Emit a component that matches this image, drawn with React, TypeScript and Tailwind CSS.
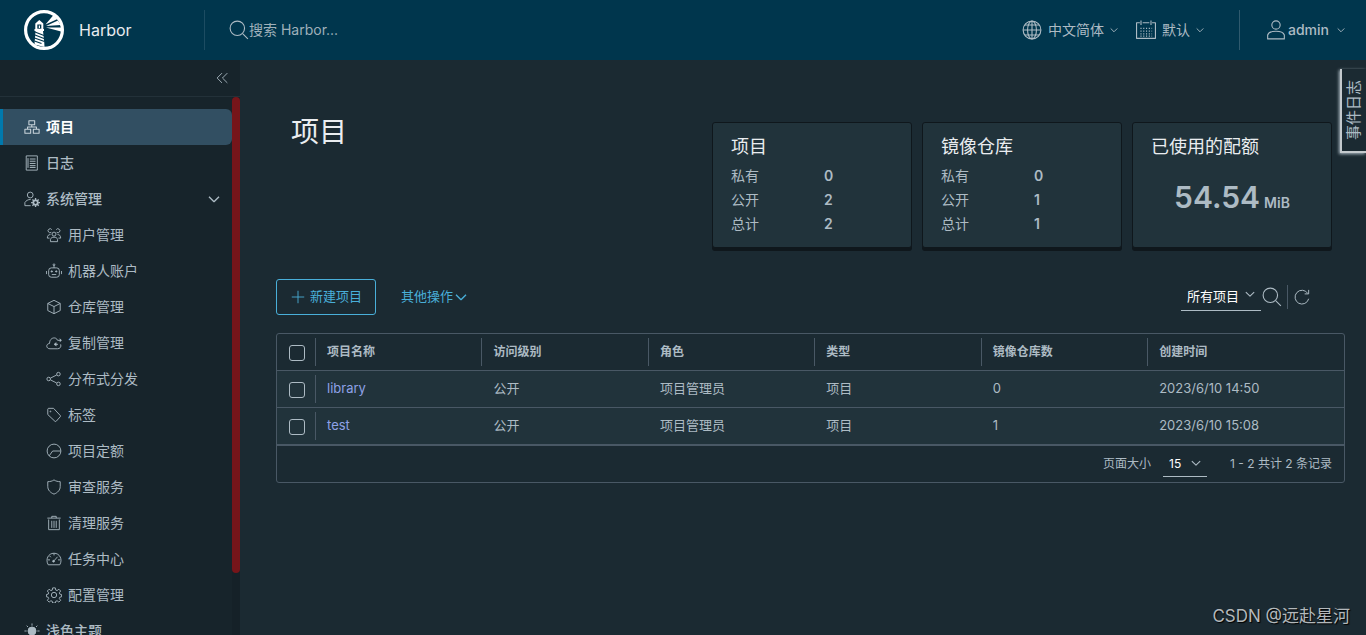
import { clsx } from 'clsx';

interface IconProps {
  className?: string;
  children?: React.ReactNode;
}

function Icon({ className = 'size-4', children }: IconProps) {
  return (
    <svg viewBox="0 0 36 36" fill="none" stroke="currentColor" strokeWidth="2" strokeLinejoin="round" className={clsx('shrink-0', className)} aria-hidden="true">
      {children}
    </svg>
  );
}

const icons = {
  organization: (
    <>
      <path d="M11 4h13v9H11zM2 23h13v9H2zM21 23h13v9H21zM17.500 13v5M8 23v-5h20v5" strokeWidth="2.400" />
    </>
  ),
  logs: (
    <>
      <path d="M5 2h25v32H5z" />
      <path d="M9 7v22M13 9h13M13 14h13M13 19h13M13 24h13M13 28h13" strokeWidth="2.200" />
    </>
  ),
  admin: (
    <>
      <circle cx="14" cy="9" r="6.500" />
      <path d="M15 33H2v-7c2-4 7-7 13-7" />
      <circle cx="26" cy="26" r="5" strokeWidth="4" />
      <path d="M26 16v4M26 32v4M16 26h4M32 26h4M19 19l3 3M30 30l3 3M33 19l-3 3M22 30l-3 3" strokeWidth="3" />
    </>
  ),
  users: (
    <>
      <circle cx="18" cy="16" r="4.500" />
      <path d="M10 33v-5c1-4 4-5 8-5s7 1 8 5v5zM12 12a4.500 4.500 0 1 1 1-6M24 12a4.500 4.500 0 1 0-1-6M10 17c-4 0-7 2-7 8h5M26 17c4 0 7 2 7 8h-5" />
    </>
  ),
  robot: (
    <>
      <rect x="6" y="11" width="24" height="21" rx="6" />
      <circle cx="18" cy="4" r="2" />
      <path d="M18 6v5M1 18v7M35 18v7M13 26h10" />
      <circle cx="13" cy="19" r="1.500" fill="currentColor" />
      <circle cx="23" cy="19" r="1.500" fill="currentColor" />
    </>
  ),
  block: <path d="M18 3l14 7v16l-14 7-14-7V10zM4 10l14 7 14-7M18 17v16" />,
  replication: (
    <>
      <path d="M33 21c2 6-2 10-7 10H9c-9 0-10-11-1-12C8 5 23 3 26 12M19 21h8M26 12h8" />
      <path d="M23 17v8l-5-4zM31 8l4 4-4 4" fill="currentColor" strokeWidth="1" />
    </>
  ),
  share: (
    <>
      <circle cx="6" cy="18" r="4" />
      <circle cx="28" cy="7" r="4" />
      <circle cx="28" cy="29" r="4" />
      <path d="M10 16l14-7M10 20l14 7" />
    </>
  ),
  tag: (
    <>
      <path d="M4 5c0-1 1-2 2-2h11l15 16c1 1 1 2 0 3l-9 10c-1 1-2 1-3 0L4 17z" />
      <circle cx="10" cy="10" r="1" />
    </>
  ),
  quota: (
    <>
      <circle cx="18" cy="18" r="15.500" />
      <path d="M7 29l8-11h18" />
    </>
  ),
  shield: <path d="M18 2c4 3 9 4 14 4v11c0 8-6 14-14 17C10 31 4 25 4 17V6c5 0 10-1 14-4z" />,
  trash: <path d="M3 7h30M13 7V3h10v4M6 10v23h24V10M13 13v16M18 13v16M23 13v16" />,
  dashboard: (
    <>
      <path d="M5 31C-2 19 5 5 18 5s20 14 13 26zM18 5v5M4 20h5M27 20h5M8 11l3 3M18 22l8-9" />
      <circle cx="17" cy="23" r="2" fill="currentColor" />
    </>
  ),
  cog: (
    <>
      <circle cx="18" cy="18" r="6" />
      <path d="M15 2h6l1 5 3 1 4-3 4 4-3 4 1 3 4 1v5l-4 1-1 3 3 4-4 4-4-3-3 1-1 4h-6l-1-4-3-1-4 3-4-4 3-4-1-3-4-1v-5l4-1 1-3-3-4 4-4 4 3 3-1z" />
    </>
  ),
  sun: (
    <>
      <circle cx="18" cy="18" r="9" fill="currentColor" />
      <path d="M18 1v5M18 30v5M1 18h5M30 18h5M6 6l3 3M27 27l3 3M30 6l-3 3M9 27l-3 3" />
    </>
  ),
};

const systemItems = [
  { label: '用户管理', icon: icons.users },
  { label: '机器人账户', icon: icons.robot },
  { label: '仓库管理', icon: icons.block },
  { label: '复制管理', icon: icons.replication },
  { label: '分布式分发', icon: icons.share },
  { label: '标签', icon: icons.tag },
  { label: '项目定额', icon: icons.quota },
  { label: '审查服务', icon: icons.shield },
  { label: '清理服务', icon: icons.trash },
  { label: '任务中心', icon: icons.dashboard },
  { label: '配置管理', icon: icons.cog },
];

const columns = ['项目名称', '访问级别', '角色', '类型', '镜像仓库数', '创建时间'];

const projects = [
  { name: 'library', access: '公开', role: '项目管理员', type: '项目', repos: 0, created: '2023/6/10 14:50' },
  { name: 'test', access: '公开', role: '项目管理员', type: '项目', repos: 1, created: '2023/6/10 15:08' },
];

const projectStats = [
  { label: '私有', value: 0 },
  { label: '公开', value: 2 },
  { label: '总计', value: 2 },
];

const repoStats = [
  { label: '私有', value: 0 },
  { label: '公开', value: 1 },
  { label: '总计', value: 1 },
];

function Chevron({ className = 'size-2' }: { className?: string }) {
  return (
    <Icon className={className}>
      <path d="M3 11l15 15 15-15" strokeWidth="4" />
    </Icon>
  );
}

function SearchIcon() {
  return (
    <Icon className="size-5">
      <circle cx="15" cy="15" r="13" />
      <path d="M25 25l9 9" />
    </Icon>
  );
}

function Logo() {
  return (
    <svg viewBox="0 0 40 40" className="size-10" aria-hidden="true">
      <circle cx="20" cy="20" r="18.400" fill="none" stroke="#fff" strokeWidth="3.200" />
      <path d="M15.300 10l4 3.500V19h.7v2h-1l1.300 12 .2 4-10-2.500L11.500 21h-1v-2h.8v-5.500z" fill="#fff" />
      <path d="M13.300 14.500h4v4.200h-4z" fill="#00364d" />
      <path d="M14.800 15.500h1.200v2.500h-1.200z" fill="#fff" />
      <path d="M11 22l9 3.500M11 25l9 3.500M10.500 28l10 3.500M10.500 31l7 2.500" stroke="#00364d" strokeWidth="1.200" />
      <path d="M21.500 14.500l8-9.500 4 4zM22 16l12-5.500 2.500 4.500zM22 17.500h15v4z" fill="#fff" />
    </svg>
  );
}

function Header() {
  return (
    <header className="flex h-15 shrink-0 items-center bg-[#00364d] text-sm text-[#adbbc4]">
      <a href="#" className="flex w-51 items-center gap-[15px] pl-6 text-base text-[#e9ecef]">
        <Logo />
        Harbor
      </a>
      <label className="flex h-10 flex-1 items-center border-l border-[#1c4c62] pl-6">
        <SearchIcon />
        <input type="text" aria-label="搜索" placeholder="搜索 Harbor..." className="w-60 bg-transparent outline-none placeholder:text-[#9fb0ba]" />
      </label>
      <button className="flex items-center gap-1.5">
        <Icon className="size-5">
          <circle cx="18" cy="18" r="16" />
          <ellipse cx="18" cy="18" rx="8" ry="16" />
          <path d="M18 2v32M2 18h32M5 9h26M5 27h26" />
        </Icon>
        中文简体
        <Chevron />
      </button>
      <button className="ml-[18px] flex items-center gap-1.5">
        <Icon className="size-5">
          <path d="M7 5H1v28h34V5h-6M12 5h12M9 1v8M27 1v8" />
          <path d="M8 15h21M8 20h21M8 25h21M8 29h21" strokeDasharray="2 3" />
        </Icon>
        默认
        <Chevron />
      </button>
      <div className="ml-[35px] h-10 border-l border-[#2f5a6e]" />
      <button className="mr-[21px] ml-[26px] flex items-center gap-0.5 font-medium">
        <Icon className="size-5">
          <circle cx="18" cy="9" r="7.500" />
          <path d="M3 34v-7c3-9 27-9 30 0v7z" />
        </Icon>
        admin
        <Chevron className="ml-1.5 size-2" />
      </button>
    </header>
  );
}

function Sidebar() {
  return (
    <aside className="flex w-60 shrink-0 flex-col bg-[#17242b] text-sm text-[#adbbc4]">
      <div className="flex h-[37px] shrink-0 items-center justify-end border-b border-[#233139] pr-2.5">
        <button aria-label="折叠">
          <Icon>
            <path d="M18 7L7 18l11 11M30 7L19 18l11 11" />
          </Icon>
        </button>
      </div>
      <div className="flex min-h-0 flex-1">
        <nav className="flex-1 overflow-hidden pt-3">
          <a href="#" className="flex h-9 items-center gap-1.5 rounded-r-md border-l-3 border-[#0079ad] bg-[#324f62] pl-[21px] font-bold text-white">
            <span className="text-[#c8d3da]"><Icon>{icons.organization}</Icon></span>
            项目
          </a>
          <a href="#" className="flex h-9 items-center gap-1.5 pl-6 font-medium">
            <Icon>{icons.logs}</Icon>
            日志
          </a>
          <button className="flex h-9 w-full items-center gap-1.5 pr-3 pl-6 font-medium">
            <Icon>{icons.admin}</Icon>
            系统管理
            <Chevron className="ml-auto size-3" />
          </button>
          {systemItems.map((item) => (
            <a key={item.label} href="#" className="flex h-9 items-center gap-1.5 pl-[46px]">
              <Icon>{item.icon}</Icon>
              {item.label}
            </a>
          ))}
          <button className="flex h-9 items-center gap-1.5 pl-6 font-medium">
            <Icon>{icons.sun}</Icon>
            浅色主题
          </button>
        </nav>
        <div className="w-2 bg-[#152128] pb-[62px]">
          <div className="h-full rounded-sm bg-[#76151a]" />
        </div>
      </div>
    </aside>
  );
}

function Card({ title, children }: { title: string; children: React.ReactNode }) {
  return (
    <section className="h-[126px] w-50 rounded-[3px] border border-[#0f171c] bg-[#21333b] px-[18px] pt-3 shadow-[0_3px_0_#0f171c]">
      <h3 className="text-lg leading-6 text-[#eaedf0]">{title}</h3>
      {children}
    </section>
  );
}

function StatsCard({ title, stats }: { title: string; stats: { label: string; value: number }[] }) {
  return (
    <Card title={title}>
      <dl className="mt-[5px] text-sm leading-6">
        {stats.map((stat) => (
          <div key={stat.label} className="flex">
            <dt className="w-[93px]">{stat.label}</dt>
            <dd className="font-semibold">{stat.value}</dd>
          </div>
        ))}
      </dl>
    </Card>
  );
}

const checkbox = 'block size-4 appearance-none rounded-[3px] border border-[#adbbc4] checked:bg-[#49afd9]';

function ProjectTable() {
  return (
    <div className="mt-[18px] rounded-[3px] border border-[#495865]">
      <table className="w-full table-fixed border-collapse text-left text-[13px] leading-5">
        <colgroup>
          <col className="w-[38px]" />
          {columns.slice(1).map((name) => (
            <col key={name} className="w-[15.6%]" />
          ))}
          <col />
        </colgroup>
        <thead>
          <tr className="h-9 text-xs">
            <th className="pt-0.5 pl-3">
              <input type="checkbox" aria-label="全选" className={checkbox} />
            </th>
            {columns.map((name) => (
              <th key={name} className="font-semibold">
                <div className="flex h-7 items-center border-l border-[#495865] pl-[11px]">{name}</div>
              </th>
            ))}
          </tr>
        </thead>
        <tbody>
          {projects.map((p) => (
            <tr key={p.name} className="h-[37px] border-t border-[#495865] bg-[#21333b]">
              <td className="pt-0.5 pl-3">
                <input type="checkbox" aria-label={p.name} className={checkbox} />
              </td>
              <td>
                <div className="flex h-7 items-center border-l border-[#495865] pb-0.5 pl-[11px]">
                  <a href="#" className="text-[#8fa2e8]">{p.name}</a>
                </div>
              </td>
              <td className="pb-0.5 pl-3">{p.access}</td>
              <td className="pb-0.5 pl-3">{p.role}</td>
              <td className="pb-0.5 pl-3">{p.type}</td>
              <td className="pb-0.5 pl-3">{p.repos}</td>
              <td className="pb-0.5 pl-3">{p.created}</td>
            </tr>
          ))}
        </tbody>
      </table>
      <div className="flex h-[38px] items-center justify-end border-t-2 border-[#495865] pr-3 text-xs">
        <label htmlFor="page-size">页面大小</label>
        <div className="relative ml-3 border-b border-[#adbbc4]">
          <select id="page-size" defaultValue="15" className="h-6 w-11 appearance-none bg-transparent pl-1.5 text-white outline-none">
            <option>15</option>
            <option>25</option>
            <option>50</option>
          </select>
          <Chevron className="pointer-events-none absolute top-1.5 right-1.5 size-2.5" />
        </div>
        <span className="ml-[23px]">1 - 2 共计 2 条记录</span>
      </div>
    </div>
  );
}

export default function App() {
  return (
    <div className="relative flex h-screen flex-col overflow-hidden bg-[#1b2a32] font-['Inter','Noto_Sans_CJK_SC',sans-serif] text-[#adbbc4]">
      <Header />
      <div className="flex min-h-0 flex-1">
        <Sidebar />
        <main className="min-w-0 flex-1 pt-[62px] pr-[21px] pl-9">
          <div className="flex items-start justify-between pr-[13px] pl-[15px]">
            <h1 className="-mt-2 text-[28px] leading-9 text-[#eaedf0]">项目</h1>
            <div className="flex gap-2.5">
              <StatsCard title="项目" stats={projectStats} />
              <StatsCard title="镜像仓库" stats={repoStats} />
              <Card title="已使用的配额">
                <p className="mt-[18px] flex items-baseline justify-center gap-1 font-semibold">
                  <span className="text-[30px] leading-10">54.54</span>
                  <span className="text-sm">MiB</span>
                </p>
              </Card>
            </div>
          </div>

          <div className="mt-[31px] flex items-center">
            <button className="flex h-9 items-center gap-1 rounded-[3px] border border-[#49afd9] px-[13px] text-[13px] text-[#49afd9]">
              <Icon className="size-4">
                <path d="M18 4v28M4 18h28" />
              </Icon>
              新建项目
            </button>
            <button className="ml-[25px] flex items-center gap-0.5 text-[13px] text-[#49afd9]">
              其他操作
              <Chevron className="size-3" />
            </button>
            <div className="mr-[35px] ml-auto flex items-center">
              <div className="relative border-b border-[#adbbc4]">
                <select aria-label="项目筛选" className="h-6 w-20 appearance-none bg-transparent pb-0.5 pl-1.5 text-[13px] text-white outline-none">
                  <option>所有项目</option>
                  <option>私有项目</option>
                  <option>公开项目</option>
                </select>
                <Chevron className="pointer-events-none absolute top-1.5 right-1.5 size-2.5" />
              </div>
              <button aria-label="搜索" className="ml-px">
                <SearchIcon />
              </button>
              <div className="ml-[5px] h-6 border-l border-[#495865]" />
              <button aria-label="刷新" className="ml-1.5">
                <Icon className="size-4">
                  <path d="M31 10A15.500 15.500 0 1 0 33 22M33 2v9h-9" strokeWidth="2.200" />
                </Icon>
              </button>
            </div>
          </div>

          <ProjectTable />
        </main>
      </div>

      <button className="absolute top-[69px] right-0 flex h-[84px] w-[26px] items-center justify-center border-b-2 border-l-2 border-[#c3c9cd] bg-[#1b2a32] text-[15px] shadow-[-1px_1px_3px_#adbbc4]">
        <span className="rotate-180 [text-orientation:sideways] [writing-mode:vertical-rl]">事件日志</span>
      </button>
      <div className="absolute right-4 bottom-[7px] text-[17px] leading-6 text-[#b3b8bb] [text-shadow:1px_1px_1px_#000]">CSDN @远赴星河</div>
    </div>
  );
}
